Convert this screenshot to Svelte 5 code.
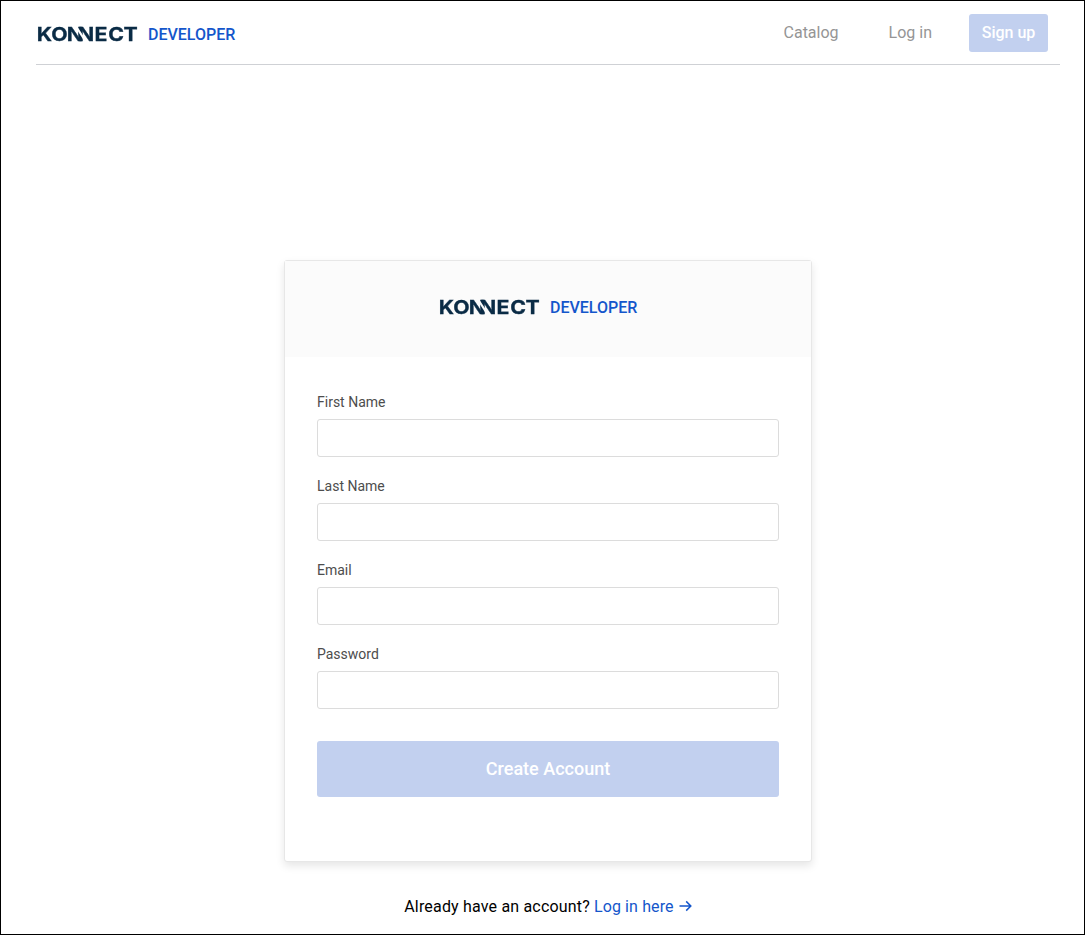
<script>
  const fields = [
    { id: 'first-name', label: 'First Name', type: 'text' },
    { id: 'last-name', label: 'Last Name', type: 'text' },
    { id: 'email', label: 'Email', type: 'email' },
    { id: 'password', label: 'Password', type: 'password' }
  ];
</script>

{#snippet brand(id)}
  <span class="brand">
    <svg class="wordmark" width="101" height="20" viewBox="0 0 101 20" role="img" aria-label="Konnect">
      <!-- The slanted gap splits the stem that both Ns share -->
      <mask {id} maskUnits="userSpaceOnUse" x="0" y="0" width="101" height="20">
        <rect width="101" height="20" fill="#fff" />
        <path d="M37.9 2.6H40.3L50.3 18H47.7Z" fill="#000" />
      </mask>
      <g mask="url(#{id})">
        <text transform="scale(1.12 1)" y="17.3" x="-.3 12.8 26.6 36.7 51.4 63.6 77.2">KONNECT</text>
      </g>
    </svg>
    <span class="dev">DEVELOPER</span>
  </span>
{/snippet}

<div class="page">
  <header>
    {@render brand('gap-top')}
    <nav>
      <a href="#catalog">Catalog</a>
      <a href="#login">Log in</a>
      <button class="signup">Sign up</button>
    </nav>
  </header>

  <main>
    <section class="card">
      <div class="card-head">{@render brand('gap-card')}</div>
      <form>
        {#each fields as f}
          <div class="field">
            <label for={f.id}>{f.label}</label>
            <input id={f.id} type={f.type} />
          </div>
        {/each}
        <button class="create" type="button">Create Account</button>
      </form>
    </section>
    <p class="foot"><span>Already have an account?</span> <a href="#login">Log in here <svg width="13" height="12" viewBox="0 0 13 12"><path d="M.5 6h11M7.2 1.4 11.8 6l-4.6 4.6" /></svg></a></p>
  </main>
</div>

<style>
  :global(body) { background: #fff; }
  .page {
    box-sizing: border-box;
    width: 1085px;
    height: 935px;
    overflow: hidden;
    border: 1px solid #000;
    padding: 0 24px 0 35px;
    font-family: Roboto, sans-serif;
    font-size: 16px;
    color: #000;
  }
  a { text-decoration: none; }
  header {
    display: flex;
    justify-content: space-between;
    box-sizing: border-box;
    height: 64px;
    padding: 13px 12px 0 1px;
    border-bottom: 1px solid #cfd1d5;
  }
  .brand { display: flex; align-items: center; height: 40px; }
  .wordmark { display: block; overflow: visible; }
  .wordmark text { font: 700 19px Inter, sans-serif; fill: #0a2b45; stroke: #0a2b45; stroke-width: 0.3px; }
  .dev { margin-left: 10px; padding-top: 2px; font-weight: 500; line-height: 20px; color: #1456cb; }
  nav { display: flex; align-items: flex-start; line-height: 38px; }
  nav a { color: #959595; }
  nav a + a { margin-left: 50px; }
  button { border: 0; border-radius: 3px; background: #c2d0ef; color: #fff; font-family: inherit; font-weight: 500; padding: 0 0 2px; }
  .signup { width: 79px; height: 38px; margin-left: 37px; font-size: 16px; }
  main { display: flex; flex-direction: column; align-items: center; padding-top: 195px; }
  .card {
    box-sizing: border-box;
    width: 528px;
    height: 602px;
    border: 1px solid #e7e7e7;
    border-radius: 3px;
    box-shadow: 0 4px 8px rgba(0, 0, 0, 0.1);
    background: #fff;
  }
  .card-head { height: 96px; box-sizing: border-box; padding: 26px 0 0 154px; background: #fbfbfb; }
  form { padding: 35px 32px 0; }
  .field { height: 84px; }
  label { display: block; height: 27px; font-size: 14px; line-height: 20px; color: #4d4d4d; }
  input {
    display: block;
    box-sizing: border-box;
    width: 462px;
    height: 38px;
    border: 1px solid #dcdcdc;
    border-radius: 3px;
    background: #fff;
  }
  .create { display: block; width: 462px; height: 56px; margin-top: 13px; font-size: 18px; }
  .foot { margin: 33px 0 0; line-height: 24px; }
  .foot span { letter-spacing: 0.18px; }
  .foot a { color: #1456cb; letter-spacing: 0.12px; }
  .foot svg { margin-left: 1px; fill: none; stroke: #1456cb; stroke-width: 1.5; vertical-align: 0; }
</style>
